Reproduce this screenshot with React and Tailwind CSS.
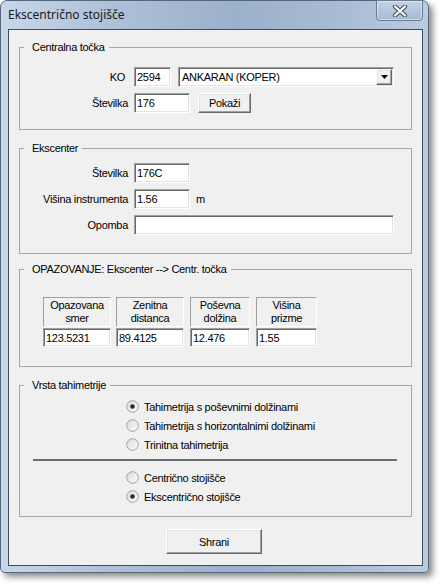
import React from "react";

const sunken =
  "border border-t-[#a0a0a0] border-l-[#a0a0a0] border-b-white border-r-white shadow-[inset_1px_1px_0_#696969,inset_-1px_-1px_0_#e3e3e3] bg-white";
const raised =
  "border border-t-white border-l-white border-b-[#696969] border-r-[#696969] shadow-[inset_-1px_-1px_0_#a0a0a0,inset_1px_1px_0_#e3e3e3] bg-[#f0f0f0]";

const Field = ({ value, className }) => (
  <input
    readOnly
    value={value}
    className={`${sunken} h-[20px] pl-[2px] pr-[2px] text-[11px] leading-[14px] tracking-[-0.3px] outline-none ${className}`}
  />
);

const Group = ({ title, className, children }) => (
  <fieldset className={`ml-[10px] mr-[10px] border border-[#a7a7a7] ${className}`}>
    <legend className="ml-[4px] pl-[8px] pr-[4px] text-[11px] leading-[14px]">{title}</legend>
    {children}
  </fieldset>
);

const Radio = ({ checked, label }) => (
  <div className="flex items-center h-[19px] pl-[106px]">
    <svg width="13" height="13" viewBox="0 0 13 13">
      <defs>
        <linearGradient id="rg" x1="0" y1="0" x2="1" y2="1">
          <stop offset="0" stopColor="#d8d8d8" />
          <stop offset="1" stopColor="#ffffff" />
        </linearGradient>
      </defs>
      <circle cx="6.5" cy="6.5" r="5.8" fill="url(#rg)" stroke="#a2a2a2" strokeWidth="1" />
      {checked && <circle cx="6.5" cy="6.5" r="2.3" fill="#2b2b2b" />}
    </svg>
    <span className="ml-[5px] text-[11px] leading-[14px]">{label}</span>
  </div>
);

const Header = ({ children, className }) => (
  <div
    className={`h-[30px] flex items-center justify-center text-center text-[11px] leading-[13px] border border-t-[#a0a0a0] border-l-[#a0a0a0] border-b-white border-r-white ${className}`}
  >
    {children}
  </div>
);

const App = () => {
  return (
    <div className="w-[442px] h-[586px] bg-white font-['Liberation_Sans',Arial,sans-serif] text-black">
      <div className="w-[429px] h-[573px] flex flex-col rounded-t-[7px] rounded-b-[5px] border border-[#56667b] bg-[linear-gradient(90deg,#c8d7ea_0%,#aec1d9_25%,#9bb0cb_55%,#a9bcd5_80%,#bccce1_100%)] shadow-[4px_4px_6px_rgba(0,0,0,0.45)]">
        {/* Title bar */}
        <div className="h-[28px] flex items-start">
          <span className="pl-[7px] pt-[6px] text-[12px] leading-[16px] font-['Noto_Sans',sans-serif] text-[#1a1a1a]">
            Ekscentrično stojišče
          </span>
          <div className="ml-auto mr-[5px] -mt-px w-[47px] h-[21px] rounded-b-[4px] border border-[#6a7b91] bg-[linear-gradient(180deg,#c3d2e5,#a6bad3)] shadow-[inset_0_0_0_1px_rgba(255,255,255,0.45)] flex items-center justify-center">
            <svg width="16" height="12" viewBox="0 0 16 12">
              <path d="M3 1.5 L13 10.5 M13 1.5 L3 10.5" stroke="#3d4a5a" strokeWidth="4.2" strokeLinecap="round" />
              <path d="M3 1.5 L13 10.5 M13 1.5 L3 10.5" stroke="#ffffff" strokeWidth="2.2" strokeLinecap="round" />
            </svg>
          </div>
        </div>

        {/* Client area */}
        <div className="ml-[7px] mr-[5px] mb-[6px] flex-1 border border-[#3f4c5c] bg-[#f0f0f0] flex flex-col text-[11px] leading-[14px] tracking-[-0.3px]">
          <Group title="Centralna točka" className="mt-[10px] pt-[13px] pb-[16px]">
            <div className="flex items-center h-[20px]">
              <span className="w-[105px] text-right">KO</span>
              <Field className="ml-[9px] w-[37px]" value="2594" />
              <div className={`${sunken} ml-[7px] w-[216px] h-[20px] flex items-center pl-[3px] pr-[1px]`}>
                <span className="flex-1">ANKARAN (KOPER)</span>
                <div className={`${raised} w-[16px] h-[16px] flex items-center justify-center`}>
                  <svg width="7" height="4" viewBox="0 0 7 4">
                    <path d="M0 0 H7 L3.5 4 Z" fill="#000" />
                  </svg>
                </div>
              </div>
            </div>
            <div className="mt-[6px] flex items-center h-[20px]">
              <span className="w-[108px] text-right">Številka</span>
              <Field className="ml-[6px] w-[56px]" value="176" />
              <button className={`${raised} ml-[8px] w-[53px] h-[20px] text-[11px]`}>Pokaži</button>
            </div>
          </Group>

          <Group title="Ekscenter" className="mt-[11px] pt-[8px] pb-[18px]">
            <div className="flex items-center h-[20px]">
              <span className="w-[108px] text-right">Številka</span>
              <Field className="ml-[6px] w-[56px]" value="176C" />
            </div>
            <div className="mt-[6px] flex items-center h-[20px]">
              <span className="w-[108px] text-right">Višina instrumenta</span>
              <Field className="ml-[6px] w-[56px]" value="1.56" />
              <span className="ml-[6px]">m</span>
            </div>
            <div className="mt-[6px] flex items-center h-[20px]">
              <span className="w-[108px] text-right">Opomba</span>
              <Field className="ml-[6px] w-[260px]" value="" />
            </div>
          </Group>

          <Group title="OPAZOVANJE:  Ekscenter --> Centr. točka" className="mt-[8px] pt-[21px] pb-[19px]">
            <div className="flex pl-[23px]">
              <div className="w-[68px] flex flex-col">
                <Header>
                  Opazovana
                  <br />
                  smer
                </Header>
                <Field className="mt-[1px] w-[68px] !h-[19px]" value="123.5231" />
              </div>
              <div className="ml-[5px] w-[68px] flex flex-col">
                <Header>
                  Zenitna
                  <br />
                  distanca
                </Header>
                <Field className="mt-[1px] w-[68px] !h-[19px]" value="89.4125" />
              </div>
              <div className="ml-[6px] w-[60px] flex flex-col">
                <Header>
                  Poševna
                  <br />
                  dolžina
                </Header>
                <Field className="mt-[1px] w-[60px] !h-[19px]" value="12.476" />
              </div>
              <div className="ml-[6px] w-[61px] flex flex-col">
                <Header>
                  Višina
                  <br />
                  prizme
                </Header>
                <Field className="mt-[1px] w-[61px] !h-[19px]" value="1.55" />
              </div>
            </div>
          </Group>

          <Group title="Vrsta tahimetrije" className="mt-[11px] pt-[5px] pb-[10px]">
            <Radio checked label="Tahimetrija s poševnimi dolžinami" />
            <Radio label="Tahimetrija s horizontalnimi dolžinami" />
            <Radio label="Trinitna tahimetrija" />
            <div className="mt-[5px] ml-[13px] mr-[14px] h-[2px] bg-[#6e6e6e]" />
            <div className="mt-[7px]">
              <Radio label="Centrično stojišče" />
              <Radio checked label="Ekscentrično stojišče" />
            </div>
          </Group>

          <button className={`${raised} mt-[12px] ml-[157px] w-[96px] h-[25px] text-[11px]`}>Shrani</button>
        </div>
      </div>
    </div>
  );
};

export default App;
